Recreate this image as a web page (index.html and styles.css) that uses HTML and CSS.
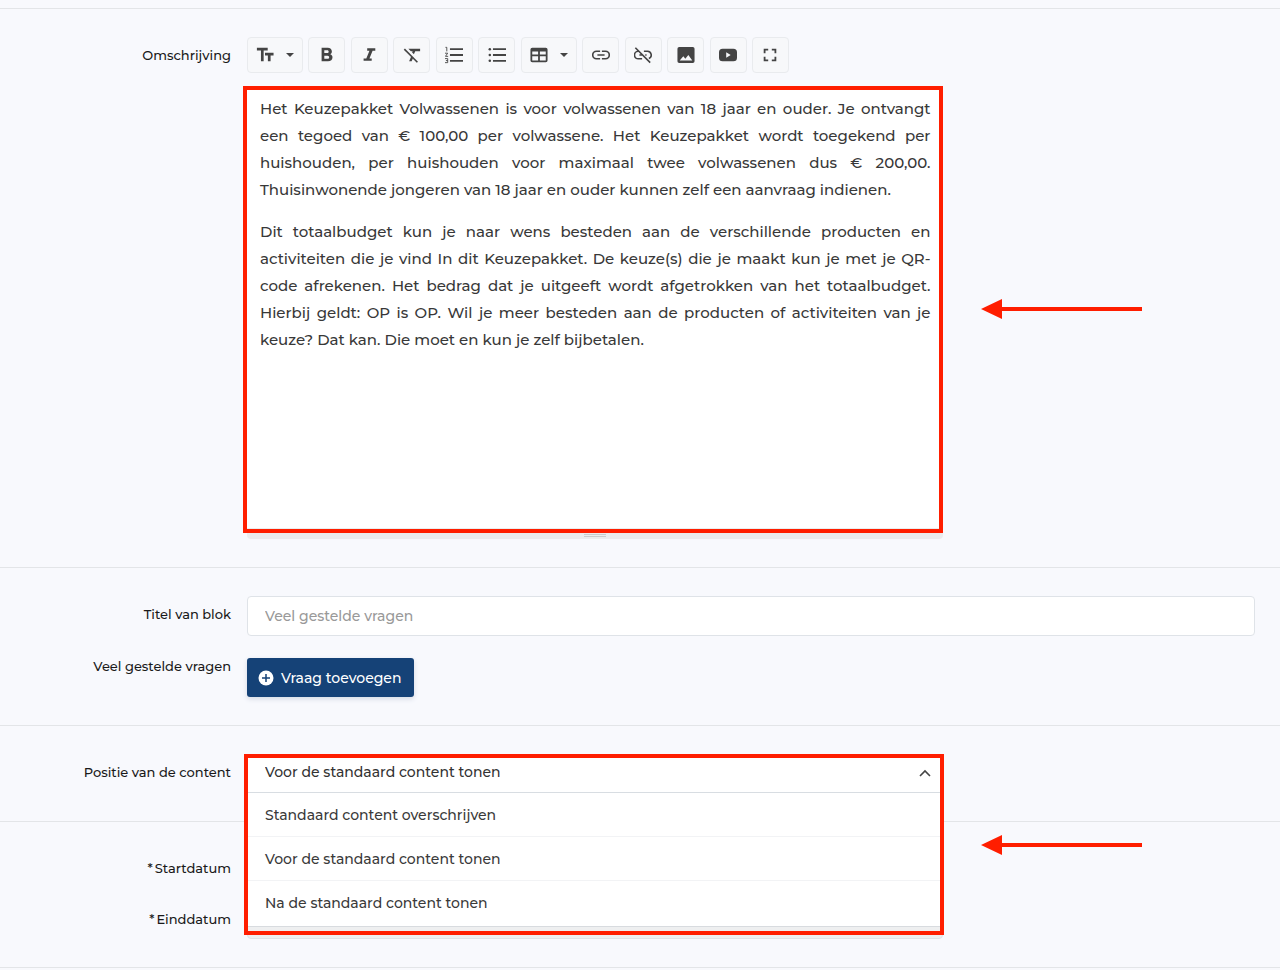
FILE: index.html
```html
<!DOCTYPE html>
<html lang="nl">
<head>
<meta charset="utf-8">
<meta name="viewport" content="width=device-width, initial-scale=1">
<title>Keuzepakket Volwassenen</title>
<link rel="stylesheet" href="styles.css">
</head>
<body>
<form class="form">
  <section class="section">
    <div class="row">
      <span class="label" id="desc-label">Omschrijving</span>
      <div class="field">
        <div class="toolbar" role="toolbar" aria-label="Opmaak">
          <button type="button" class="tool tool-wide" aria-label="Tekstgrootte">
            <svg class="icon" viewBox="0 0 20 20"><path d="M1 2h12v3H8.500v12h-3V5H1zM10 7.500h9.500v3h-3.300V17h-3v-6.500H10z"/></svg>
            <svg class="caret" viewBox="0 0 10 5"><path d="M0 0h10L5 5z"/></svg>
          </button>
          <button type="button" class="tool" aria-label="Vet"><svg class="icon" viewBox="0 0 20 20"><path fill-rule="evenodd" d="M4 2h6.800c2.800 0 4.600 1.600 4.600 4 0 1.400-.7 2.500-1.800 3.100 1.600.6 2.500 1.800 2.500 3.500 0 2.700-2 4.400-5 4.400H4zM7 4.700v3.200h3.300c2.100 0 2.100-3.200 0-3.200zM7 10.700v3.500h3.600c2.400 0 2.400-3.500 0-3.500z"/></svg></button>
          <button type="button" class="tool" aria-label="Cursief"><svg class="icon" viewBox="0 0 20 20"><path d="M8 2.500h9v2.700h-3l-3.500 8.600H13v2.700H4v-2.700h3l3.500-8.600H8z"/></svg></button>
          <button type="button" class="tool" aria-label="Opmaak wissen"><svg class="icon" viewBox="0 0 20 20"><path d="M6 3h13v2.700h-5.400l-1.500 3.600-2-2 .6-1.600H8.700zM9.300 11l2 2-1.700 4H6.800z"/><path class="line line-slim" d="M1.500 3.500l14.500 14.500"/></svg></button>
          <button type="button" class="tool" aria-label="Genummerde lijst"><svg class="icon" viewBox="0 0 20 20"><path d="M5.500 2.500H20v2H5.500zM5.500 9H20v2H5.500zM5.500 15.500H20v2H5.500z"/><path class="thin" d="M.5 1.500H2V6M0 8h3L.5 11.500H3.500M0 14h3v4.500H0M1 16.200h2"/></svg></button>
          <button type="button" class="tool" aria-label="Lijst"><svg class="icon" viewBox="0 0 20 20"><path d="M5.500 2.500H20v2H5.500zM5.500 9H20v2H5.500zM5.500 15.500H20v2H5.500z"/><circle cx="2" cy="3.500" r="1.400"/><circle cx="2" cy="10" r="1.400"/><circle cx="2" cy="16.500" r="1.400"/></svg></button>
          <button type="button" class="tool tool-wide" aria-label="Tabel">
            <svg class="icon" viewBox="0 0 20 20"><path fill-rule="evenodd" d="M2.500 2h15a2 2 0 0 1 2 2v12a2 2 0 0 1-2 2h-15a2 2 0 0 1-2-2V4a2 2 0 0 1 2-2zM2.500 6v3.500H9V6zM11 6v3.500h6.500V6zM2.500 11.500V16H9v-4.500zM11 11.500V16h6.500v-4.500z"/></svg>
            <svg class="caret" viewBox="0 0 10 5"><path d="M0 0h10L5 5z"/></svg>
          </button>
          <button type="button" class="tool" aria-label="Link"><svg class="icon" viewBox="0 0 20 20"><path class="line line-slim" d="M9 5.800H5a4.200 4.200 0 0 0 0 8.400h4M11 5.800h4a4.200 4.200 0 0 1 0 8.400h-4M6 10h8"/></svg></button>
          <button type="button" class="tool" aria-label="Link verwijderen"><svg class="icon" viewBox="0 0 20 20"><path class="line line-slim" d="M4.500 5.800A4.200 4.200 0 0 0 5 14.200h4M11 5.800h4a4.200 4.200 0 0 1 1.500 8.100M6 10h3M12.500 10H14M1.500 2l16.500 16.500"/></svg></button>
          <button type="button" class="tool" aria-label="Afbeelding"><svg class="icon" viewBox="0 0 20 20"><path fill-rule="evenodd" d="M2.500 1h15a2 2 0 0 1 2 2v14a2 2 0 0 1-2 2h-15a2 2 0 0 1-2-2V3a2 2 0 0 1 2-2zM3 16h14l-4.400-6-3.300 4.300L7 11.500z"/></svg></button>
          <button type="button" class="tool" aria-label="Video"><svg class="icon" viewBox="0 0 20 20"><path fill-rule="evenodd" d="M4 3h12q4 0 4 4v6q0 4-4 4H4q-4 0-4-4V7q0-4 4-4zM8 7v6l5-3z"/></svg></button>
          <button type="button" class="tool" aria-label="Volledig scherm"><svg class="icon" viewBox="0 0 20 20"><path d="M3 3h5v2H5v3H3zM12 3h5v5h-2V5h-3zM3 12h2v3h3v2H3zM15 12h2v5h-5v-2h3z"/></svg></button>
        </div>
        <div class="editor">
          <div class="editor-text" contenteditable="true" role="textbox" aria-multiline="true" aria-labelledby="desc-label" spellcheck="false">
            <p>Het Keuzepakket Volwassenen is voor volwassenen van 18 jaar en ouder. Je ontvangt een tegoed van € 100,00 per volwassene. Het Keuzepakket wordt toegekend per huishouden, per huishouden voor maximaal twee volwassenen dus € 200,00. Thuisinwonende jongeren van 18 jaar en ouder kunnen zelf een aanvraag indienen.</p>
            <p>Dit totaalbudget kun je naar wens besteden aan de verschillende producten en activiteiten die je vind In dit Keuzepakket. De keuze(s) die je maakt kun je met je QR-code afrekenen. Het bedrag dat je uitgeeft wordt afgetrokken van het totaalbudget. Hierbij geldt: OP is OP. Wil je meer besteden aan de producten of activiteiten van je keuze? Dat kan. Die moet en kun je zelf bijbetalen.</p>
          </div>
          <div class="resize"><span class="grip"></span></div>
          <div class="frame frame-editor"></div>
          <svg class="arrow" viewBox="0 0 161 20"><path d="M0 10L21 0v8h140v4H21v8z"/></svg>
        </div>
      </div>
    </div>
  </section>

  <section class="section">
    <div class="row">
      <label class="label" for="title">Titel van blok</label>
      <div class="field"><input class="input" id="title" type="text" placeholder="Veel gestelde vragen"></div>
    </div>
    <div class="row">
      <span class="label label-button">Veel gestelde vragen</span>
      <div class="field">
        <button type="button" class="add"><svg class="add-icon" viewBox="0 0 16 16"><circle cx="8" cy="8" r="7.500"/><path d="M8 4v8M4 8h8"/></svg>Vraag toevoegen</button>
      </div>
    </div>
  </section>

  <section class="section">
    <div class="row">
      <label class="label" for="position">Positie van de content</label>
      <div class="field">
        <div class="dropdown">
          <select class="select" id="position">
            <option>Standaard content overschrijven</option>
            <option selected>Voor de standaard content tonen</option>
            <option>Na de standaard content tonen</option>
          </select>
          <svg class="chevron" viewBox="0 0 12 8"><path d="M1 7l5-5 5 5"/></svg>
          <div class="menu" role="listbox" aria-label="Positie van de content">
            <button type="button" class="choice" role="option">Standaard content overschrijven</button>
            <button type="button" class="choice" role="option" aria-selected="true">Voor de standaard content tonen</button>
            <button type="button" class="choice" role="option">Na de standaard content tonen</button>
          </div>
          <div class="frame frame-menu"></div>
          <svg class="arrow" viewBox="0 0 161 20"><path d="M0 10L21 0v8h140v4H21v8z"/></svg>
        </div>
      </div>
    </div>
  </section>

  <section class="section section-dates">
    <div class="row">
      <label class="label" for="start"><span class="star">*</span>Startdatum</label>
      <div class="field"><input class="input input-date" id="start" type="text"></div>
    </div>
    <div class="row">
      <label class="label" for="end"><span class="star">*</span>Einddatum</label>
      <div class="field"><input class="input input-date" id="end" type="text"></div>
    </div>
  </section>
  <div class="section-end"></div>
</form>
</body>
</html>
```
FILE: styles.css
```css
* { box-sizing: border-box; }

body {
  margin: 0;
  background: #f8f9fd;
  color: #1a1a1a;
  font-family: Montserrat, Inter, sans-serif;
  font-size: 14px;
  font-weight: 500;
}

button, input, select { font: inherit; }

.form { padding-top: 8px; }

.section {
  display: flex;
  flex-direction: column;
  gap: 22px;
  padding: 28px 0;
  border-top: 1px solid #e3e5e8;
}

.section-end { border-top: 1px solid #e3e5e8; }

.row {
  display: grid;
  grid-template-columns: 231px 1fr;
  column-gap: 16px;
  padding-right: 25px;
}

.label {
  padding-top: 8px;
  font-size: 13px;
  line-height: 20px;
  text-align: right;
}

.label-button {
  padding-top: 0;
  line-height: 16px;
}

.field { min-width: 0; }

.toolbar {
  display: flex;
  justify-content: space-between;
  max-width: 542px;
  margin-bottom: 13px;
}

.tool {
  display: flex;
  align-items: center;
  justify-content: center;
  width: 37px;
  height: 36px;
  padding: 0;
  border: 1px solid #e9ebee;
  border-radius: 4px;
  background: #f7f8fa;
}

.tool-wide {
  gap: 12px;
  width: 56px;
}

.icon {
  width: 18px;
  height: 18px;
  fill: #444;
}

.icon .line {
  fill: none;
  stroke: #444;
  stroke-width: 2;
}

.icon .line-slim { stroke-width: 1.8; }

.icon .thin {
  fill: none;
  stroke: #444;
  stroke-width: 1;
}

.caret {
  width: 8px;
  height: 4px;
  fill: #444;
}

.editor, .dropdown {
  position: relative;
  width: 69%;
}

.editor-text {
  min-height: 442px;
  padding: 9px 12px 9px 13px;
  background: #fff;
  color: #383838;
  font-size: 15px;
  line-height: 27px;
  text-align: justify;
  outline: none;
}

.editor-text p { margin: 0 0 15px; }

.resize {
  display: flex;
  justify-content: center;
  height: 11px;
  padding-top: 6px;
  border-radius: 0 0 4px 4px;
  background: #ebecee;
}

.grip {
  width: 22px;
  height: 3px;
  border: solid #c9cbcd;
  border-width: 1px 0;
}

.frame {
  position: absolute;
  border: 4px solid #ff1e00;
  pointer-events: none;
}

.frame-editor { inset: 0 0 6px -4px; }

.frame-menu { inset: 0 -1px -142px -3px; z-index: 2; }

.arrow {
  position: absolute;
  left: calc(100% + 38px);
  width: 161px;
  height: 20px;
  fill: #ff1e00;
}

.editor .arrow { top: 213px; }

.dropdown .arrow { top: 81px; }

.input {
  display: block;
  width: 100%;
  height: 40px;
  padding: 0 17px;
  border: 1px solid #dfe3e8;
  border-radius: 4px;
  background: #fff;
  color: #222;
}

.input::placeholder { color: #999; }

.input-date {
  width: 69%;
  height: 38px;
  background: #eeeff0;
}

.add {
  display: flex;
  align-items: center;
  gap: 7px;
  height: 39px;
  padding: 0 13px 0 11px;
  border: 0;
  border-radius: 3px;
  background: #154277;
  box-shadow: 0 2px 5px #d5dae4;
  color: #fff;
}

.add-icon {
  width: 16px;
  height: 16px;
  fill: #fff;
  stroke: #154277;
  stroke-width: 1.5;
}

.add-icon circle { stroke: none; }

.select {
  display: block;
  width: 100%;
  height: 39px;
  padding: 0 18px 2px;
  border: 0;
  border-bottom: 1px solid #d8dde2;
  border-radius: 0;
  background: #fff;
  color: #333;
  appearance: none;
}

.chevron {
  position: absolute;
  top: 15px;
  right: 12px;
  width: 12px;
  height: 8px;
  fill: none;
  stroke: #444;
  stroke-width: 1.6;
}

.menu {
  position: absolute;
  top: 100%;
  left: 0;
  z-index: 1;
  width: 100%;
  padding-bottom: 1px;
  border-bottom: 1px solid #d8dbdf;
  background: #fff;
}

.choice {
  display: block;
  width: 100%;
  height: 44px;
  padding: 0 18px;
  border: 0;
  border-bottom: 1px solid #f2f3f5;
  background: #fff;
  color: #3a3a3a;
  text-align: left;
}

.choice:last-child { border-bottom: 0; }

.star { margin-right: 2px; }

.section-dates { gap: 13px; }
```
